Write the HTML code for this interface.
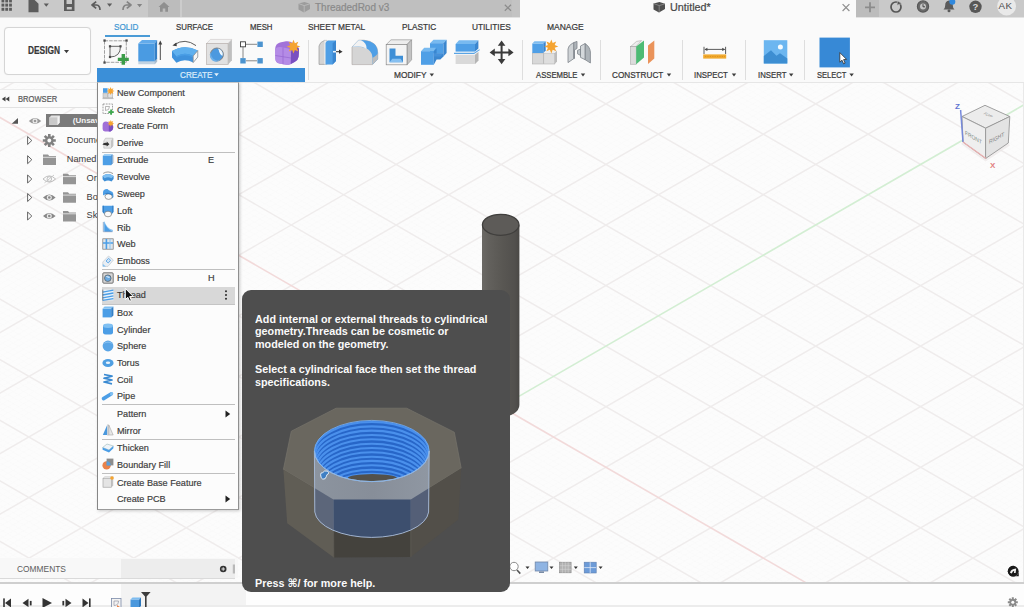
<!DOCTYPE html>
<html>
<head>
<meta charset="utf-8">
<title>Fusion</title>
<style>
html,body{margin:0;padding:0;}
body{width:1024px;height:607px;overflow:hidden;position:relative;background:#fcfcfc;font-family:"Liberation Sans","DejaVu Sans",sans-serif;color:#3c3c3c;}
.abs{position:absolute;}
#canvas{position:absolute;left:0;top:0;width:1024px;height:607px;}
#topbar{position:absolute;left:0;top:0;width:1024px;height:17px;background:#c9c9c9;overflow:hidden;}
.ttl{font-size:10.5px;white-space:nowrap;line-height:14px;}
#toolbar{position:absolute;left:0;top:17px;width:1024px;height:65px;background:#fafafa;border-bottom:1px solid #e6e6e6;}
.tab{position:absolute;top:22px;font-size:8.8px;line-height:11px;color:#3c3c3c;white-space:nowrap;transform:translateX(-50%);}
.grp{position:absolute;top:70px;font-size:8.8px;line-height:11px;color:#3c3c3c;white-space:nowrap;transform:translateX(-50%);}
.sep{position:absolute;top:40px;width:1px;height:40px;background:#dedede;}
#menu{position:absolute;left:97px;top:82px;width:142px;height:428px;background:#fcfcfc;border:1px solid #8f8f8f;border-left-color:#868686;border-bottom-color:#9a9a9a;border-top-color:#c8c8c8;box-sizing:border-box;box-shadow:1px 1px 3px rgba(0,0,0,.2);}
.mi{position:absolute;left:18.9px;font-size:9.8px;transform:scaleX(.93);transform-origin:0 50%;color:#333;-webkit-text-stroke:0.2px #555;white-space:nowrap;line-height:11px;letter-spacing:0;}
.msep{position:absolute;left:4px;width:133px;height:1px;background:#bfbfbf;}
.ic{position:absolute;left:4px;width:12px;height:12px;overflow:visible;}
#tip{position:absolute;left:242px;top:290px;width:268px;height:302px;background:#4e4e4e;border-radius:9px;overflow:hidden;}
#tip p{position:absolute;margin:0;left:13px;color:#fafafa;font-weight:bold;font-size:11.4px;line-height:12.4px;white-space:nowrap;transform:scaleX(.947);transform-origin:0 50%;}
.lb{position:absolute;white-space:nowrap;color:#383838;-webkit-text-stroke:0.22px currentColor;}
.fit{display:inline-block;transform-origin:0 50%;white-space:nowrap;}
.bt{position:absolute;font-size:9.2px;line-height:11px;color:#3a3a3a;white-space:nowrap;}
</style>
</head>
<body>
<svg id="canvas" width="1024" height="607" viewBox="0 0 1024 607">
<rect x="0" y="0" width="1024" height="607" fill="#fcfcfc"/>
<path d="M-10.0 84.0L1034.0 -518.7M-10.0 90.1L1034.0 -512.7M-10.0 102.2L1034.0 -500.6M-10.0 108.2L1034.0 -494.5M-10.0 114.3L1034.0 -488.4M-10.0 120.3L1034.0 -482.4M-10.0 126.4L1034.0 -476.3M-10.0 132.4L1034.0 -470.3M-10.0 138.5L1034.0 -464.2M-10.0 144.6L1034.0 -458.2M-10.0 150.6L1034.0 -452.1M-10.0 162.7L1034.0 -440.0M-10.0 168.8L1034.0 -433.9M-10.0 174.8L1034.0 -427.9M-10.0 180.9L1034.0 -421.8M-10.0 186.9L1034.0 -415.8M-10.0 193.0L1034.0 -409.7M-10.0 199.1L1034.0 -403.7M-10.0 205.1L1034.0 -397.6M-10.0 211.2L1034.0 -391.5M-10.0 223.3L1034.0 -379.4M-10.0 229.3L1034.0 -373.4M-10.0 235.4L1034.0 -367.3M-10.0 241.5L1034.0 -361.3M-10.0 247.5L1034.0 -355.2M-10.0 253.6L1034.0 -349.2M-10.0 259.6L1034.0 -343.1M-10.0 265.7L1034.0 -337.0M-10.0 271.7L1034.0 -331.0M-10.0 283.8L1034.0 -318.9M-10.0 289.9L1034.0 -312.8M-10.0 296.0L1034.0 -306.8M-10.0 302.0L1034.0 -300.7M-10.0 308.1L1034.0 -294.6M-10.0 314.1L1034.0 -288.6M-10.0 320.2L1034.0 -282.5M-10.0 326.2L1034.0 -276.5M-10.0 332.3L1034.0 -270.4M-10.0 344.4L1034.0 -258.3M-10.0 350.5L1034.0 -252.3M-10.0 356.5L1034.0 -246.2M-10.0 362.6L1034.0 -240.1M-10.0 368.6L1034.0 -234.1M-10.0 374.7L1034.0 -228.0M-10.0 380.7L1034.0 -222.0M-10.0 386.8L1034.0 -215.9M-10.0 392.9L1034.0 -209.9M-10.0 405.0L1034.0 -197.8M-10.0 411.0L1034.0 -191.7M-10.0 417.1L1034.0 -185.6M-10.0 423.1L1034.0 -179.6M-10.0 429.2L1034.0 -173.5M-10.0 435.2L1034.0 -167.5M-10.0 441.3L1034.0 -161.4M-10.0 447.4L1034.0 -155.4M-10.0 453.4L1034.0 -149.3M-10.0 465.5L1034.0 -137.2M-10.0 471.6L1034.0 -131.1M-10.0 477.6L1034.0 -125.1M-10.0 483.7L1034.0 -119.0M-10.0 489.7L1034.0 -113.0M-10.0 495.8L1034.0 -106.9M-10.0 501.9L1034.0 -100.9M-10.0 507.9L1034.0 -94.8M-10.0 514.0L1034.0 -88.7M-10.0 526.1L1034.0 -76.6M-10.0 532.1L1034.0 -70.6M-10.0 538.2L1034.0 -64.5M-10.0 544.3L1034.0 -58.5M-10.0 550.3L1034.0 -52.4M-10.0 556.4L1034.0 -46.4M-10.0 562.4L1034.0 -40.3M-10.0 568.5L1034.0 -34.2M-10.0 574.5L1034.0 -28.2M-10.0 586.6L1034.0 -16.1M-10.0 592.7L1034.0 -10.0M-10.0 598.8L1034.0 -4.0M-10.0 604.8L1034.0 2.1M-10.0 610.9L1034.0 8.2M-10.0 616.9L1034.0 14.2M-10.0 623.0L1034.0 20.3M-10.0 629.0L1034.0 26.3M-10.0 635.1L1034.0 32.4M-10.0 647.2L1034.0 44.5M-10.0 653.3L1034.0 50.5M-10.0 659.3L1034.0 56.6M-10.0 665.4L1034.0 62.7M-10.0 671.4L1034.0 68.7M-10.0 677.5L1034.0 74.8M-10.0 683.5L1034.0 80.8M-10.0 689.6L1034.0 86.9M-10.0 695.7L1034.0 92.9M-10.0 707.8L1034.0 105.0M-10.0 713.8L1034.0 111.1M-10.0 719.9L1034.0 117.2M-10.0 725.9L1034.0 123.2M-10.0 732.0L1034.0 129.3M-10.0 738.0L1034.0 135.3M-10.0 744.1L1034.0 141.4M-10.0 750.2L1034.0 147.4M-10.0 756.2L1034.0 153.5M-10.0 768.3L1034.0 165.6M-10.0 774.4L1034.0 171.7M-10.0 780.4L1034.0 177.7M-10.0 786.5L1034.0 183.8M-10.0 792.5L1034.0 189.8M-10.0 798.6L1034.0 195.9M-10.0 804.7L1034.0 201.9M-10.0 810.7L1034.0 208.0M-10.0 816.8L1034.0 214.1M-10.0 828.9L1034.0 226.2M-10.0 834.9L1034.0 232.2M-10.0 841.0L1034.0 238.3M-10.0 847.1L1034.0 244.3M-10.0 853.1L1034.0 250.4M-10.0 859.2L1034.0 256.4M-10.0 865.2L1034.0 262.5M-10.0 871.3L1034.0 268.6M-10.0 877.3L1034.0 274.6M-10.0 889.4L1034.0 286.7M-10.0 895.5L1034.0 292.8M-10.0 901.6L1034.0 298.8M-10.0 907.6L1034.0 304.9M-10.0 913.7L1034.0 311.0M-10.0 919.7L1034.0 317.0M-10.0 925.8L1034.0 323.1M-10.0 931.8L1034.0 329.1M-10.0 937.9L1034.0 335.2M-10.0 950.0L1034.0 347.3M-10.0 956.1L1034.0 353.3M-10.0 962.1L1034.0 359.4M-10.0 968.2L1034.0 365.5M-10.0 974.2L1034.0 371.5M-10.0 980.3L1034.0 377.6M-10.0 986.3L1034.0 383.6M-10.0 992.4L1034.0 389.7M-10.0 998.5L1034.0 395.7M-10.0 1010.6L1034.0 407.8M-10.0 1016.6L1034.0 413.9M-10.0 1022.7L1034.0 420.0M-10.0 1028.7L1034.0 426.0M-10.0 1034.8L1034.0 432.1M-10.0 1040.8L1034.0 438.1M-10.0 1046.9L1034.0 444.2M-10.0 1053.0L1034.0 450.2M-10.0 1059.0L1034.0 456.3M-10.0 1071.1L1034.0 468.4M-10.0 1077.2L1034.0 474.5M-10.0 1083.2L1034.0 480.5M-10.0 1089.3L1034.0 486.6M-10.0 1095.3L1034.0 492.6M-10.0 1101.4L1034.0 498.7M-10.0 1107.5L1034.0 504.7M-10.0 1113.5L1034.0 510.8M-10.0 1119.6L1034.0 516.9M-10.0 1131.7L1034.0 529.0M-10.0 1137.7L1034.0 535.0M-10.0 1143.8L1034.0 541.1M-10.0 1149.9L1034.0 547.1M-10.0 1155.9L1034.0 553.2M-10.0 1162.0L1034.0 559.2M-10.0 1168.0L1034.0 565.3M-10.0 1174.1L1034.0 571.4M-10.0 1180.1L1034.0 577.4M-10.0 584.1L1034.0 1186.8M-10.0 578.0L1034.0 1180.7M-10.0 571.9L1034.0 1174.7M-10.0 565.9L1034.0 1168.6M-10.0 559.8L1034.0 1162.6M-10.0 553.8L1034.0 1156.5M-10.0 547.7L1034.0 1150.4M-10.0 541.7L1034.0 1144.4M-10.0 529.6L1034.0 1132.3M-10.0 523.5L1034.0 1126.2M-10.0 517.4L1034.0 1120.2M-10.0 511.4L1034.0 1114.1M-10.0 505.3L1034.0 1108.0M-10.0 499.3L1034.0 1102.0M-10.0 493.2L1034.0 1095.9M-10.0 487.2L1034.0 1089.9M-10.0 481.1L1034.0 1083.8M-10.0 469.0L1034.0 1071.7M-10.0 462.9L1034.0 1065.7M-10.0 456.9L1034.0 1059.6M-10.0 450.8L1034.0 1053.5M-10.0 444.8L1034.0 1047.5M-10.0 438.7L1034.0 1041.4M-10.0 432.7L1034.0 1035.4M-10.0 426.6L1034.0 1029.3M-10.0 420.5L1034.0 1023.3M-10.0 408.4L1034.0 1011.2M-10.0 402.4L1034.0 1005.1M-10.0 396.3L1034.0 999.0M-10.0 390.3L1034.0 993.0M-10.0 384.2L1034.0 986.9M-10.0 378.2L1034.0 980.9M-10.0 372.1L1034.0 974.8M-10.0 366.0L1034.0 968.8M-10.0 360.0L1034.0 962.7M-10.0 347.9L1034.0 950.6M-10.0 341.8L1034.0 944.5M-10.0 335.8L1034.0 938.5M-10.0 329.7L1034.0 932.4M-10.0 323.7L1034.0 926.4M-10.0 317.6L1034.0 920.3M-10.0 311.5L1034.0 914.3M-10.0 305.5L1034.0 908.2M-10.0 299.4L1034.0 902.1M-10.0 287.3L1034.0 890.0M-10.0 281.3L1034.0 884.0M-10.0 275.2L1034.0 877.9M-10.0 269.1L1034.0 871.9M-10.0 263.1L1034.0 865.8M-10.0 257.0L1034.0 859.8M-10.0 251.0L1034.0 853.7M-10.0 244.9L1034.0 847.6M-10.0 238.9L1034.0 841.6M-10.0 226.8L1034.0 829.5M-10.0 220.7L1034.0 823.4M-10.0 214.6L1034.0 817.4M-10.0 208.6L1034.0 811.3M-10.0 202.5L1034.0 805.2M-10.0 196.5L1034.0 799.2M-10.0 190.4L1034.0 793.1M-10.0 184.4L1034.0 787.1M-10.0 178.3L1034.0 781.0M-10.0 166.2L1034.0 768.9M-10.0 160.1L1034.0 762.9M-10.0 154.1L1034.0 756.8M-10.0 148.0L1034.0 750.7M-10.0 142.0L1034.0 744.7M-10.0 135.9L1034.0 738.6M-10.0 129.9L1034.0 732.6M-10.0 123.8L1034.0 726.5M-10.0 117.7L1034.0 720.5M-10.0 105.6L1034.0 708.4M-10.0 99.6L1034.0 702.3M-10.0 93.5L1034.0 696.2M-10.0 87.5L1034.0 690.2M-10.0 81.4L1034.0 684.1M-10.0 75.4L1034.0 678.1M-10.0 69.3L1034.0 672.0M-10.0 63.2L1034.0 666.0M-10.0 57.2L1034.0 659.9M-10.0 45.1L1034.0 647.8M-10.0 39.0L1034.0 641.7M-10.0 33.0L1034.0 635.7M-10.0 26.9L1034.0 629.6M-10.0 20.9L1034.0 623.6M-10.0 14.8L1034.0 617.5M-10.0 8.7L1034.0 611.5M-10.0 2.7L1034.0 605.4M-10.0 -3.4L1034.0 599.3M-10.0 -15.5L1034.0 587.2M-10.0 -21.5L1034.0 581.2M-10.0 -27.6L1034.0 575.1M-10.0 -33.7L1034.0 569.1M-10.0 -39.7L1034.0 563.0M-10.0 -45.8L1034.0 557.0M-10.0 -51.8L1034.0 550.9M-10.0 -57.9L1034.0 544.8M-10.0 -63.9L1034.0 538.8M-10.0 -76.0L1034.0 526.7M-10.0 -82.1L1034.0 520.6M-10.0 -88.2L1034.0 514.6M-10.0 -94.2L1034.0 508.5M-10.0 -100.3L1034.0 502.4M-10.0 -106.3L1034.0 496.4M-10.0 -112.4L1034.0 490.3M-10.0 -118.4L1034.0 484.3M-10.0 -124.5L1034.0 478.2M-10.0 -136.6L1034.0 466.1M-10.0 -142.7L1034.0 460.1M-10.0 -148.7L1034.0 454.0M-10.0 -154.8L1034.0 447.9M-10.0 -160.8L1034.0 441.9M-10.0 -166.9L1034.0 435.8M-10.0 -172.9L1034.0 429.8M-10.0 -179.0L1034.0 423.7M-10.0 -185.1L1034.0 417.7M-10.0 -197.2L1034.0 405.6M-10.0 -203.2L1034.0 399.5M-10.0 -209.3L1034.0 393.4M-10.0 -215.3L1034.0 387.4M-10.0 -221.4L1034.0 381.3M-10.0 -227.4L1034.0 375.3M-10.0 -233.5L1034.0 369.2M-10.0 -239.6L1034.0 363.2M-10.0 -245.6L1034.0 357.1M-10.0 -257.7L1034.0 345.0M-10.0 -263.8L1034.0 338.9M-10.0 -269.8L1034.0 332.9M-10.0 -275.9L1034.0 326.8M-10.0 -281.9L1034.0 320.8M-10.0 -288.0L1034.0 314.7M-10.0 -294.1L1034.0 308.7M-10.0 -300.1L1034.0 302.6M-10.0 -306.2L1034.0 296.5M-10.0 -318.3L1034.0 284.4M-10.0 -324.3L1034.0 278.4M-10.0 -330.4L1034.0 272.3M-10.0 -336.5L1034.0 266.3M-10.0 -342.5L1034.0 260.2M-10.0 -348.6L1034.0 254.2M-10.0 -354.6L1034.0 248.1M-10.0 -360.7L1034.0 242.0M-10.0 -366.7L1034.0 236.0M-10.0 -378.8L1034.0 223.9M-10.0 -384.9L1034.0 217.8M-10.0 -391.0L1034.0 211.8M-10.0 -397.0L1034.0 205.7M-10.0 -403.1L1034.0 199.6M-10.0 -409.1L1034.0 193.6M-10.0 -415.2L1034.0 187.5M-10.0 -421.2L1034.0 181.5M-10.0 -427.3L1034.0 175.4M-10.0 -439.4L1034.0 163.3M-10.0 -445.5L1034.0 157.3M-10.0 -451.5L1034.0 151.2M-10.0 -457.6L1034.0 145.1M-10.0 -463.6L1034.0 139.1M-10.0 -469.7L1034.0 133.0M-10.0 -475.7L1034.0 127.0M-10.0 -481.8L1034.0 120.9M-10.0 -487.9L1034.0 114.9M-10.0 -500.0L1034.0 102.8M-10.0 -506.0L1034.0 96.7M-10.0 -512.1L1034.0 90.6M-10.0 -518.1L1034.0 84.6" stroke="#f9f8f8" stroke-width="0.5" fill="none"/>
<path d="M-10.0 96.1L1034.0 -506.6M-10.0 156.7L1034.0 -446.0M-10.0 217.2L1034.0 -385.5M-10.0 277.8L1034.0 -324.9M-10.0 338.3L1034.0 -264.4M-10.0 398.9L1034.0 -203.8M-10.0 459.5L1034.0 -143.2M-10.0 520.0L1034.0 -82.7M-10.0 580.6L1034.0 -22.1M-10.0 641.1L1034.0 38.4M-10.0 762.3L1034.0 159.6M-10.0 822.8L1034.0 220.1M-10.0 883.4L1034.0 280.7M-10.0 943.9L1034.0 341.2M-10.0 1004.5L1034.0 401.8M-10.0 1065.1L1034.0 462.4M-10.0 1125.6L1034.0 522.9M-10.0 1186.2L1034.0 583.5M-10.0 535.6L1034.0 1138.3M-10.0 475.1L1034.0 1077.8M-10.0 414.5L1034.0 1017.2M-10.0 353.9L1034.0 956.6M-10.0 293.4L1034.0 896.1M-10.0 232.8L1034.0 835.5M-10.0 172.3L1034.0 775.0M-10.0 51.1L1034.0 653.8M-10.0 -9.4L1034.0 593.3M-10.0 -70.0L1034.0 532.7M-10.0 -130.5L1034.0 472.2M-10.0 -191.1L1034.0 411.6M-10.0 -251.7L1034.0 351.0M-10.0 -312.2L1034.0 290.5M-10.0 -372.8L1034.0 229.9M-10.0 -433.3L1034.0 169.4M-10.0 -493.9L1034.0 108.8" stroke="#efecec" stroke-width="1.5" fill="none"/>
<path d="M-10.0 701.7L501.0 406.7" stroke="#efecec" stroke-width="1.5"/>
<path d="M501.0 406.7L1034.0 99.0" stroke="#d3eed3" stroke-width="1.6"/>
<path d="M-10.0 111.7L1034.0 714.4" stroke="#f2dada" stroke-width="1.6"/>
<defs>
<linearGradient id="cylg" x1="0" x2="1" y1="0" y2="0">
<stop offset="0" stop-color="#6b6965"/><stop offset="0.18" stop-color="#63615d"/><stop offset="0.55" stop-color="#595753"/><stop offset="0.88" stop-color="#52504d"/><stop offset="1" stop-color="#4a4845"/>
</linearGradient>
</defs>
<!-- cylinder -->
<path d="M482 225 L482 405 A18.700 12 0 0 0 519.400 405 L519.400 225 Z" fill="url(#cylg)"/>
<ellipse cx="500.700" cy="224.800" rx="18.300" ry="10.500" fill="#5d5b58" stroke="#403f3d" stroke-width="1.3"/>
<!-- viewcube -->
<g>
<path d="M962.5 142 L985.6 158.5 L1008.5 143.5" fill="none" stroke="#e9e4e4" stroke-width="5" opacity=".6"/>
<polygon points="985,105.3 1009.8,116.5 985.6,128.2 962,116.5" fill="#ececec" stroke="#969696" stroke-width="0.9"/>
<polygon points="962,116.5 985.6,128.2 985.6,158.5 963,142" fill="#efefef" stroke="#969696" stroke-width="0.9"/>
<polygon points="985.6,128.2 1009.8,116.5 1008.3,143 985.6,158.5" fill="#e3e3e3" stroke="#969696" stroke-width="0.9"/>
<path d="M960.6 110 L963 142" stroke="#7689da" stroke-width="1.5"/>
<path d="M963 142 L986 158.6" stroke="#eab0b0" stroke-width="1.2"/>
<text x="955" y="109" font-family="Liberation Sans, sans-serif" font-size="8" fill="#5f73d2" font-weight="bold">Z</text>
<text x="990" y="168" font-family="Liberation Sans, sans-serif" font-size="8" fill="#e27f7f" font-weight="bold">X</text>
<text transform="matrix(0.86,0.5,0,1,965,134.5)" font-family="Liberation Sans, sans-serif" font-size="5.7" fill="#7d8a86">FRONT</text>
<text transform="matrix(0.86,-0.46,0,1,989,144)" font-family="Liberation Sans, sans-serif" font-size="5.7" fill="#7d7d7d">RIGHT</text>
<text transform="matrix(0.86,0.42,-0.86,0.42,982.5,113.5)" font-family="Liberation Sans, sans-serif" font-size="4.6" fill="#8a8a8a">TOP</text>
</g>

</svg>
<div class="abs" style="left:0;top:89px;width:97px;height:1px;background:#ececec"></div>
<div class="abs" style="left:0;top:90px;width:97px;height:17px;background:#fbfbfb"></div>
<div class="abs" style="left:0;top:107px;width:97px;height:1px;background:#e2e2e2"></div>
<div class="abs" style="left:46px;top:114.2px;width:52px;height:12.6px;background:#7a7a7a"></div>
<div class="bt" style="left:72.8px;top:115.4px;font-size:8px;font-weight:bold;color:#f4f4f4">(Unsaved)</div>
<div class="bt" style="left:66.8px;top:134.8px">Document Settings</div>
<div class="bt" style="left:66.8px;top:154px">Named Views</div>
<div class="bt" style="left:86.5px;top:173.2px">Origin</div>
<div class="bt" style="left:86.5px;top:191.8px">Bodies</div>
<div class="bt" style="left:86.5px;top:210.4px">Sketches</div>
<svg class="abs" style="left:0;top:84px" width="97" height="146" viewBox="0 84 97 146">
<path d="M1.800 99 L5.500 96.600 V101.400 Z M5.600 99 L9.300 96.600 V101.400 Z" fill="#444"/>
<path d="M11.700 123.700 H18 V118 Z" fill="#555"/>
<!-- eye row1 -->
<g><path d="M28.800 121 Q35 114.800 41.200 121 Q35 127.200 28.800 121 Z" fill="#9a9a9a"/><circle cx="35" cy="121" r="2.500" fill="#ececec"/><circle cx="35" cy="121" r="1.300" fill="#9a9a9a"/></g>
<!-- cube icon -->
<path d="M49.400 117.400 L51.400 115.600 H59.600 V122.800 L57.600 124.900 H49.400 Z" fill="#e3e3e3"/>
<path d="M49.400 117.400 H57.600 V124.900 H49.400 Z" fill="#c9c9c9"/>
<path d="M57.600 117.400 L59.600 115.600 V122.800 L57.600 124.900 Z" fill="#f2f2f2"/>
<!-- triangles -->
<g fill="none" stroke="#555" stroke-width=".9">
<path d="M27.600 136.500 L31.800 140.500 L27.600 144.500 Z"/>
<path d="M27.600 155.700 L31.800 159.700 L27.600 163.700 Z"/>
<path d="M27.600 175 L31.800 179 L27.600 183 Z"/>
<path d="M27.600 193.500 L31.800 197.500 L27.600 201.500 Z"/>
<path d="M27.600 212 L31.800 216 L27.600 220 Z"/>
</g>
<!-- gear -->
<g transform="translate(49.300 140.500)">
<circle r="4.300" fill="#808080"/>
<g stroke="#808080" stroke-width="2.600"><path d="M0 -6.500 V6.500 M-6.500 0 H6.500 M-4.600 -4.600 L4.600 4.600 M-4.600 4.600 L4.600 -4.600"/></g>
<circle r="1.900" fill="#fafafa"/>
</g>
<!-- folders -->
<g fill="#959595">
<path d="M43 154.500 H48 L49.200 156 H56 V165 H43 Z"/>
<path d="M63 173.800 H68 L69.200 175.300 H76 V184.300 H63 Z"/>
<path d="M63 192.300 H68 L69.200 193.800 H76 V202.800 H63 Z"/>
<path d="M63 211 H68 L69.200 212.500 H76 V221.500 H63 Z"/>
</g>
<g stroke="#fafafa" stroke-width=".7"><path d="M43 157.300 H56 M63 176.600 H76 M63 195.100 H76 M63 213.800 H76"/></g>
<!-- eyes rows 4-6 -->
<g><path d="M43 179 Q49.300 172.800 55.600 179 Q49.300 185.200 43 179 Z" fill="none" stroke="#b9b9b9" stroke-width=".9"/><circle cx="49.300" cy="179" r="2.300" fill="none" stroke="#b9b9b9" stroke-width=".9"/><path d="M44.500 182.800 L54 175" stroke="#c4c4c4" stroke-width=".9"/></g>
<g><path d="M43 197.500 Q49.300 191.300 55.600 197.500 Q49.300 203.700 43 197.500 Z" fill="#888888"/><circle cx="49.300" cy="197.500" r="2.500" fill="#e9e9e9"/><circle cx="49.300" cy="197.500" r="1.300" fill="#888888"/></g>
<g><path d="M43 216 Q49.300 209.800 55.600 216 Q49.300 222.200 43 216 Z" fill="#888888"/><circle cx="49.300" cy="216" r="2.500" fill="#e9e9e9"/><circle cx="49.300" cy="216" r="1.300" fill="#888888"/></g>
</svg>
<div class="abs" style="left:1023px;top:83px;width:1px;height:500px;background:#e9e9e9"></div>
<div class="abs" style="left:0;top:558px;width:238px;height:20px;background:#f8f8f8"></div>
<div class="abs" style="left:121px;top:559px;width:114px;height:18.500px;background:#ededed"></div>
<div class="abs" style="left:0;top:577.500px;width:235px;height:1px;background:#dadada"></div>
<div class="abs" style="left:0;top:582px;width:1024px;height:1.500px;background:#cfcfcf"></div>
<div class="abs" style="left:0;top:583.500px;width:1024px;height:24px;background:#fdfdfd"></div>
<div class="abs" style="left:121px;top:584px;width:125px;height:23px;background:#f3f3f3"></div>
<div class="abs" style="left:0;top:604.500px;width:1024px;height:3px;background:#ececec"></div>
<svg class="abs" style="left:0;top:556px" width="1024" height="51" viewBox="0 556 1024 51">
<circle cx="223.200" cy="569" r="3.300" fill="#333"/><path d="M221.400 569 H225 M223.200 567.200 V570.800" stroke="#eee" stroke-width=".9"/>
<rect x="232.800" y="564.500" width="2.200" height="9" fill="#b9b9b9"/>
<!-- timeline controls -->
<g fill="#333" transform="translate(0 1.400)">
<rect x="3.200" y="597" width="1.600" height="9"/><path d="M11 597 V606 L5 601.500 Z"/>
<path d="M28.500 597.300 V605.700 L22.500 601.500 Z"/><rect x="29.800" y="599.500" width="1.800" height="4.500"/>
<path d="M42.500 596.500 L52 601.500 L42.500 606.500 Z"/>
<path d="M65.500 597.300 V605.700 L71.500 601.500 Z"/><rect x="62.400" y="599.500" width="1.800" height="4.500"/>
<path d="M82.500 597 V606 L88.500 601.500 Z"/><rect x="89" y="597" width="1.600" height="9"/>
</g>
<g transform="translate(0 1)"><rect x="111.500" y="597.500" width="9.500" height="9.500" fill="#f3f3f3" stroke="#7a8aa8" stroke-width=".8"/>
<path d="M114 600 H118.500 Q118.500 604.500 114 604.500 Z" fill="none" stroke="#889" stroke-width=".6"/>
<path d="M117 604 L121.500 607 H117 Z" fill="#e9824a"/>
<rect x="130.500" y="598.500" width="8.500" height="8.500" fill="#4a98dd"/><path d="M130.500 598.500 L132.500 596.600 H141 L139 598.500 Z" fill="#7dbcf0"/><path d="M139 598.500 L141 596.600 V605 L139 607 Z" fill="#2f78bc"/></g>
<path d="M141 592 H150.600 L146.600 596.400 V607 H145 V596.400 Z" fill="#3d3d3d"/>
<!-- nav icons -->
<circle cx="514" cy="566.500" r="4.200" fill="#fff" stroke="#8c8c8c" stroke-width="1"/>
<path d="M517 570 L520.300 573.600" stroke="#555" stroke-width="1.600"/>
<g fill="#333"><path d="M525.500 566.500 H529.500 L527.500 569 Z"/><path d="M549.500 566.500 H553.500 L551.500 569 Z"/><path d="M573.800 566.500 H577.800 L575.800 569 Z"/><path d="M598.600 566.500 H602.600 L600.600 569 Z"/></g>
<rect x="535.200" y="562" width="12.600" height="9" fill="#8fb4e3" stroke="#6f86a8" stroke-width=".8"/><rect x="539" y="571.400" width="5" height="1.600" fill="#7a8ca6"/>
<rect x="559.500" y="562.200" width="11.600" height="10.600" fill="#b2b2b2" stroke="#888" stroke-width=".6"/>
<path d="M562.400 562.200 V572.800 M565.300 562.200 V572.800 M568.200 562.200 V572.800 M559.500 565.700 H571.100 M559.500 569.300 H571.100" stroke="#d8d8d8" stroke-width=".5"/>
<rect x="584.200" y="562.200" width="12" height="10.800" fill="#6c9bd8" stroke="#5f7fae" stroke-width=".6"/>
<path d="M590.200 562.200 V573 M584.200 567.600 H596.200" stroke="#dfe9f6" stroke-width=".8"/>
<!-- right icons -->
<g transform="translate(12.2 0.400)"><path d="M1001 565.400 A5.400 5.400 0 1 0 1006.400 570.800 L1006.600 575.800 L1003 575.800 Z" fill="#1a1a1a"/><circle cx="1001" cy="570.800" r="5.400" fill="#1a1a1a"/>
<path d="M997.800 572.400 Q998.500 568.800 1004 568.200 L1003.400 572.600 L1001.800 572.600 L1002 570.400 Q1000.400 570.800 999.600 573 Z" fill="#f5f5f5"/></g>
<g transform="translate(1012.800 602.300)"><circle r="3.300" fill="#8a8a8a"/><g stroke="#8a8a8a" stroke-width="2"><path d="M0 -5 V5 M-5 0 H5 M-3.500 -3.500 L3.500 3.500 M-3.500 3.500 L3.500 -3.500"/></g><circle r="1.500" fill="#fdfdfd"/></g>
</svg>
<div id="topbar">
<div class="abs" style="left:148px;top:0;width:32px;height:17px;background:#bcbcbc"></div>
<div class="abs" style="left:180px;top:0;width:2px;height:17px;background:#cccccc"></div>
<div class="abs" style="left:182px;top:0;width:330px;height:17px;background:#bfbfbf"></div>
<div class="abs" style="left:512px;top:0;width:8px;height:17px;background:#c3c3c3"></div>
<div class="abs" style="left:520px;top:0;width:336px;height:17px;background:#fafafa"></div>
<div class="abs" style="left:856px;top:0;width:23px;height:17px;background:#bcbcbc"></div>
<svg class="abs" style="left:0;top:0" width="1024" height="17" viewBox="0 0 1024 17">
<g fill="#5c5c5c" transform="translate(0 0.800)">
<!-- grid -->
<rect x="1.5" y="-1" width="2.8" height="2.6"/><rect x="5.3" y="-1" width="2.8" height="2.6"/><rect x="9.1" y="-1" width="2.8" height="2.6"/>
<rect x="1.5" y="2.8" width="2.8" height="3"/><rect x="5.3" y="2.8" width="2.8" height="3"/><rect x="9.1" y="2.8" width="2.8" height="3"/>
<rect x="1.5" y="7" width="2.8" height="3"/><rect x="5.3" y="7" width="2.8" height="3"/><rect x="9.1" y="7" width="2.8" height="3"/>
<!-- file -->
<path d="M28.5 -1 H34.5 L38.5 3 V11.5 H28.5 Z"/>
<!-- save -->
<path d="M64 -1 H74.5 V10.2 H64 Z M66.5 -1 V3.2 H72 V-1 Z M66.8 6.2 V8.8 H71.8 V6.2 Z" fill-rule="evenodd"/>
</g>
<path d="M43.7 3.6 H48.9 L46.3 6.8 Z M107 3.6 H112.2 L109.6 6.8 Z" fill="#5c5c5c"/>
<path transform="translate(0 0.500)" d="M96.2 1.2 L92 4.5 L96.2 7.8 M92.5 4.5 H96.5 Q100 4.8 100 9.5" fill="none" stroke="#5c5c5c" stroke-width="1.7" stroke-linejoin="round"/>
<g opacity=".72" transform="translate(0 0.500)">
<path d="M126.8 1.2 L131 4.5 L126.8 7.8 M130.5 4.5 H126.5 Q123 4.8 123 9.5" fill="none" stroke="#6a6a6a" stroke-width="1.7" stroke-linejoin="round"/>
<path d="M137 3.6 H142.2 L139.6 6.8 Z" fill="#6a6a6a"/>
</g>
<!-- home -->
<path d="M158.5 7 L164 2 L169.5 7 H168 V11.8 H165.3 V8.6 H162.7 V11.8 H160 V7 Z" fill="#8f8f8f"/>
<!-- tab1 icon cube -->
<path d="M298.5 3.5 L304.5 2 L310 3.8 V9 L304 12.5 L298.5 9.5 Z" fill="#9c9c9c"/>
<path d="M298.5 3.5 L304.2 5.6 L310 3.8 M304.2 5.6 V12.3" stroke="#c4c4c4" stroke-width=".7" fill="none"/>
<path d="M504.800 4.800 L511 10.800 M511 4.800 L504.800 10.800" stroke="#8c8c8c" stroke-width="1.2"/>
<!-- tab2 icon cube -->
<path d="M653.5 3.5 L659.5 2 L665 3.8 V9 L659 12.5 L653.5 9.5 Z" fill="#4f4f4f"/>
<path d="M653.5 3.5 L659.2 5.6 L665 3.8 M659.2 5.6 V12.3" stroke="#9a9a9a" stroke-width=".7" fill="none"/>
<path d="M842.6 4.200 L849.400 11 M849.400 4.200 L842.600 11" stroke="#8f8f8f" stroke-width="1.2"/>
<!-- plus -->
<path d="M865 7.3 H875 M870 2.3 V12.3" stroke="#8c8c8c" stroke-width="1.8"/>
<!-- refresh -->
<circle cx="896" cy="7" r="5" fill="none" stroke="#555" stroke-width="1.7"/>
<path d="M897.5 0.8 L901.8 3.6 L897 5.2 Z" fill="#555" stroke="#cacaca" stroke-width=".6"/>
<!-- clock -->
<circle cx="923" cy="6.5" r="5.6" fill="#6a6a6a" stroke="#585858" stroke-width="1.2"/>
<circle cx="923" cy="6.5" r="3" fill="#c4c4c4"/>
<path d="M923 4.2 V6.8 H925" stroke="#444" stroke-width="1" fill="none"/>
<!-- bell -->
<path d="M949 0.5 Q952.8 1 952.8 5.2 Q952.8 8 954.5 9.6 H943.5 Q945.2 8 945.2 5.2 Q945.2 1 949 0.5 Z" fill="#5b5b5b"/>
<circle cx="949" cy="10.8" r="1.5" fill="#5b5b5b"/>
<circle cx="952.3" cy="1.8" r="3" fill="#2f88dd"/>
<!-- help -->
<circle cx="975.5" cy="6.8" r="6.2" fill="#565656"/>
<text x="975.5" y="10.3" text-anchor="middle" font-family="Liberation Sans, sans-serif" font-size="9.5" font-weight="bold" fill="#d8d8d8">?</text>
<!-- avatar -->
<circle cx="1006.6" cy="6.2" r="9.4" fill="#e9e9e9"/>
</svg>
<div class="abs" style="left:998.5px;top:0px;font-size:9.8px;color:#4f4f4f;letter-spacing:.4px">AK</div>
</div>
<div id="toolbar">
<div class="abs" style="left:0;top:0;width:520px;height:1px;background:#e2e2e2"></div><div class="abs" style="left:856px;top:0;width:168px;height:1px;background:#e2e2e2"></div>
<div class="abs" style="left:4px;top:9.5px;width:85px;height:46px;border:1px solid #d5d5d5;border-radius:4px;background:#fdfdfd;box-shadow:0 0 1px #e4e4e4"></div>
<!--LABELS-->
<div class="abs" style="left:97px;top:51px;width:208px;height:14px;background:#3b8fd8"></div>
<div class="abs" style="left:104.5px;top:17.5px;width:45px;height:2.5px;background:#4a9bd6"></div>
</div>
<div class="sep" style="left:308px"></div>
<div class="sep" style="left:522px"></div>
<div class="sep" style="left:600px"></div>
<div class="sep" style="left:682px"></div>
<div class="sep" style="left:745px"></div>
<div class="sep" style="left:804px"></div>
<svg class="abs" style="left:0;top:17px" width="1024" height="66" viewBox="0 17 1024 66">
<g fill="#3c3c3c">
<path d="M64 50 H69 L66.5 53.2 Z"/>
<path d="M429.6 73.6 H434 L431.8 76.4 Z"/>
<path d="M580.8 73.6 H585.2 L583 76.4 Z"/>
<path d="M666.8 73.6 H671.2 L669 76.4 Z"/>
<path d="M731.8 73.6 H736.2 L734 76.4 Z"/>
<path d="M789 73.6 H793.4 L791.2 76.4 Z"/>
<path d="M849.4 73.6 H853.8 L851.6 76.4 Z"/>
</g>
<path d="M214.2 73.2 H218.8 L216.5 76.2 Z" fill="#e6f2fc"/>
<!-- 1 sketch -->
<g>
<rect x="104.5" y="40.8" width="21.800" height="21.500" fill="none" stroke="#8a8a8a" stroke-width=".8" stroke-dasharray="3.6 1"/>
<g fill="#4a4a4a"><rect x="103.4" y="39.4" width="2.3" height="2.3"/><rect x="125.4" y="39.4" width="2.3" height="2.3"/><rect x="103.4" y="61.4" width="2.3" height="2.3"/></g>
<path d="M110 46.3 H120.5 Q120.5 57 110 57 Z" fill="#f2f2f2" stroke="#555" stroke-width=".9"/>
<g fill="#4a4a4a"><rect x="108.9" y="45.2" width="2.2" height="2.2"/><rect x="119.4" y="45.2" width="2.2" height="2.2"/><rect x="108.9" y="55.9" width="2.2" height="2.2"/></g>
<path d="M121.6 54 H125 V57.7 H128.8 V61 H125 V64.8 H121.6 V61 H117.8 V57.7 H121.6 Z" fill="#3c9d49"/>
</g>
<!-- 2 extrude -->
<g>
<path d="M138.300 61 H154.700 L157.100 58.200 V61.400 L154.700 64.200 H138.300 Z" fill="#c2d3e2"/>
<path d="M154.700 61 L157.100 58.200 V61.400 L154.700 64.200 Z" fill="#a9bccd"/>
<rect x="138.300" y="43.500" width="16.400" height="17.800" fill="#4a9be2"/>
<path d="M138.300 43.500 L142 40.100 H157.100 L154.700 43.500 Z" fill="#62abeb"/>
<path d="M154.700 43.500 L157.100 40.100 V58.400 L154.700 61.300 Z" fill="#3580c6"/>
<path d="M160.300 43.500 V60" stroke="#4a4a4a" stroke-width="1"/>
<path d="M160.300 40.600 L162.200 44.600 H158.400 Z" fill="#3f3f3f"/>
</g>
<!-- 3 revolve -->
<g>
<path d="M172 51 Q184.500 43.500 197.800 50.600 L197.800 57 L193.200 62.600 Q184.500 57.600 176.400 62.800 L172 57.600 Z" fill="#3f92dc"/>
<path d="M172 51 Q184.500 43.500 197.800 50.600 L193.200 56 Q184.500 51.200 176.400 56.200 Z" fill="#5fb0ee"/>
<path d="M176.400 56.200 Q184.500 51.200 193.200 56 L193.200 57.600 Q184.500 53 176.400 57.800 Z" fill="#4a9fe6"/>
<path d="M193.200 56 L197.800 50.600 V57 L193.200 62.600 Z" fill="#f6f6f6" stroke="#8a8a8a" stroke-width=".7"/>
<path d="M174.400 44.600 Q185 37.600 196 45.600" fill="none" stroke="#4a4a4a" stroke-width=".9"/>
<path d="M172.400 45.600 L176.400 42.600 L176.800 46.200 Z" fill="#3f3f3f"/>
</g>
<!-- 4 hole -->
<g>
<path d="M206.600 43.500 L210.400 39.400 H231.900 L228.100 43.500 Z" fill="#f0f0f0" stroke="#c4bfbc" stroke-width=".5"/>
<path d="M228.100 43.500 L231.900 39.400 V60.200 L228.100 64.500 Z" fill="#bfbfbf"/>
<rect x="206.600" y="43.500" width="21.500" height="21" fill="#e1e1e1" stroke="#b9b3af" stroke-width=".7"/>
<circle cx="216.900" cy="54.500" r="6.500" fill="#4c99df" stroke="#7c7c7c" stroke-width=".9"/>
<path d="M217.600 48.600 A6 6 0 0 1 222.800 55.600 Q221 51.500 217.600 48.600 Z" fill="#eaf5fd"/>
<path d="M218.500 49 Q222.400 51.500 222.500 56 Q219.500 54.500 218.500 49 Z" fill="#f4faff"/>
<path d="M211.400 51.600 A6 6 0 0 0 220.600 59.600 A6.600 6.600 0 0 1 211.400 51.600 Z" fill="#6db0ea"/>
</g>
<!-- 5 pattern -->
<g>
<path d="M243 47 V58 M246 44.3 H257 M246 60.8 H257" stroke="#7a7a7a" stroke-width=".9" fill="none"/>
<rect x="240.5" y="41.8" width="5" height="5" fill="#fff" stroke="#3f3f3f" stroke-width=".9"/>
<rect x="257.4" y="41.6" width="5.4" height="5.4" fill="#4b93cf"/>
<rect x="240.3" y="58.1" width="5.4" height="5.4" fill="#4b93cf"/>
<rect x="257.4" y="58.1" width="5.4" height="5.4" fill="#4b93cf"/>
</g>
<!-- 6 form -->
<g>
<path d="M275.2 49 Q275.2 44 280 42.6 L286 41.3 Q290 40.8 293 43 L297 46 Q299.3 48 299 52 L298.5 57 Q298 60 295 61.8 L290.5 64.2 Q288 65 285 64.6 L279.5 63.6 Q275.6 62.6 275.4 59 Z" fill="#a272d9"/>
<path d="M275.3 49.5 Q276 46.5 280.5 47 L288.5 48.6 Q291 49.5 291 52.5 L290.8 64 Q288 65 285 64.6 L279.5 63.6 Q275.6 62.6 275.4 59 Z" fill="#b48be6"/>
<path d="M291 52.5 Q291.5 49.5 294 47.5 L297.3 46.2 Q299.3 48 299 52 L298.5 57 Q298 60 295 61.8 L290.8 64 Z" fill="#7a4fc0"/>
<path d="M283 47.5 V64.3 M275.4 55.5 L290.9 58" stroke="#9566d0" stroke-width=".7" fill="none"/>
<path d="M293.5 39.8 L294.9 43.3 L298.3 41.8 L296.8 45.2 L300.3 46.6 L296.8 48 L298.3 51.4 L294.9 49.9 L293.5 53.4 L292.1 49.9 L288.7 51.4 L290.2 48 L286.7 46.6 L290.2 45.2 L288.7 41.8 L292.1 43.3 Z" fill="#f5a431"/>
</g>
<!-- 7 press pull -->
<g>
<path d="M319 46 Q319.8 42.2 324.5 40.4 L327 40.4 V64.4 H319 Z" fill="#d4d4d4" stroke="#8c8c8c" stroke-width=".6"/>
<path d="M324.5 40.4 H336 L333 43 V64.4 H324.5 Q324.2 50 324.5 40.4" fill="#f0f0f0"/>
<path d="M325.5 43 Q326 41 328 40.4 H336 V61 L332.6 64.4 H325.5 Z" fill="#4f9fe6"/>
<path d="M332.6 43.2 L336 40.4 V61 L332.6 64.4 Z" fill="#3a86cf"/>
<path d="M333 51.7 H339" stroke="#e9f3fc" stroke-width="1.6"/>
<path d="M336 51.7 H340" stroke="#333" stroke-width="1"/>
<path d="M342.6 51.7 L339 49.6 V53.8 Z" fill="#333"/>
</g>
<!-- 8 fillet -->
<g>
<path d="M352 47 L358.5 40.2 H364 Q377.8 41.5 377.8 53 V59 L372.5 64.6 H352 Z" fill="#d5d5d5" stroke="#a9a39f" stroke-width=".6"/>
<path d="M358.5 40.2 H364 Q377.8 41.5 377.8 53 V59 L372.5 64.6 V58 Q372 47.5 358 46.6 L352.3 46.8 Z" fill="#4f9fe6"/>
<path d="M358.5 40.2 L352.3 46.8 L358 46.6 Q363 46.5 366.6 49 Q367 43 361 40.3 Z" fill="#f2f2f2"/>
<path d="M372.5 58 Q377.5 55 377.8 53 V59 L372.5 64.6 Z" fill="#bdbdbd"/>
</g>
<!-- 9 shell -->
<g>
<path d="M386.2 44.6 L391 39.8 H411.6 L407 44.6 Z" fill="#ededed" stroke="#8a8a8a" stroke-width=".6"/>
<path d="M407 44.6 L411.6 39.8 V59.8 L407 64.8 Z" fill="#c3c3c3" stroke="#8a8a8a" stroke-width=".6"/>
<rect x="386.2" y="44.6" width="20.8" height="20.2" fill="#f4f4f4" stroke="#8a8a8a" stroke-width=".7"/>
<path d="M389.5 48.6 H395.5 V55.8 H403 V62.2 H389.5 Z" fill="#3f8fd6"/>
<path d="M391.6 50.5 L395.5 48.6 V55.8 H403 L401 57.8 H391.6 Z" fill="#74b4ec" opacity=".0"/>
<path d="M389.5 62.2 L392.3 58.8 H400.6 L403 62.2 Z" fill="#86c0f1"/>
</g>
<!-- 10 combine -->
<g>
<path d="M430 43.2 L433.5 39.8 H446.6 L443.4 43.2 Z" fill="#78baf0"/>
<rect x="430" y="43.2" width="13.4" height="10" fill="#4f9fe6"/>
<path d="M443.400 43.2 L446.6 39.8 V53 L443.4 56.5 Z" fill="#3a86cf"/>
<path d="M421 51.2 L424.2 47.8 H436 L433.6 51.2 Z" fill="#78baf0"/>
<rect x="421" y="51.2" width="12.8" height="13.6" fill="#4f9fe6"/>
<path d="M433.8 51.2 L436.6 48.2 V53.400 H443.5 V56.400 L440.3 59.6 H436.6 L433.8 64.8 Z" fill="#3a86cf"/>
<path d="M433.8 53.2 H443.4 L440.300 56.6 H433.8 Z" fill="#4590da"/>
</g>
<!-- 11 split -->
<g>
<path d="M455.6 54.8 H475 L478.4 52 V60.6 L475 64 H455.600 Z" fill="#d9d9d9"/>
<path d="M475 54.8 L478.4 52 V60.6 L475 64 Z" fill="#b5b5b5"/>
<path d="M455.6 44 L459 40.2 H478.4 L475 44 Z" fill="#78baf0"/>
<rect x="455.6" y="44" width="19.4" height="7.6" fill="#4f9fe6"/>
<path d="M475 44 L478.4 40.2 V48.6 L475 51.6 Z" fill="#3a86cf"/>
<path d="M454 53.4 H474 L479.6 49.600" stroke="#5aa4e4" stroke-width="1.1" fill="none"/>
</g>
<!-- 12 move -->
<g fill="#3a3a3a">
<path d="M501.600 40.6 L505.400 45.8 H502.600 V51.400 H508.400 V48.600 L513.600 52.400 L508.400 56.200 V53.400 H502.600 V59 H505.400 L501.600 64.200 L497.800 59 H500.600 V53.400 H494.800 V56.200 L489.600 52.400 L494.800 48.600 V51.400 H500.600 V45.800 H497.800 Z"/>
</g>
<!-- 13 new component -->
<g>
<rect x="532.3" y="53" width="11" height="11" fill="#d8d8d8" stroke="#a8a8a8" stroke-width=".5"/>
<rect x="543.8" y="53" width="11" height="11" fill="#dedede" stroke="#a8a8a8" stroke-width=".5"/>
<path d="M543.8 53 L546 50.500 H557 L554.800 53 Z" fill="#efefef"/>
<path d="M554.800 53 L557 50.500 V61.500 L554.800 64 Z" fill="#bcbcbc"/>
<rect x="532.3" y="43.5" width="11" height="9.500" fill="#4f9fe6"/>
<path d="M532.3 43.5 L534.500 41.200 H545.700 L543.300 43.5 Z" fill="#7dbcf0"/>
<path d="M543.300 43.500 L545.700 41.200 V50.600 L543.300 53 Z" fill="#3a86cf"/>
<path d="M551.3 39.400 L552.700 43 L556.200 41.500 L554.700 45 L558.300 46.400 L554.700 47.800 L556.200 51.300 L552.700 49.800 L551.300 53.400 L549.900 49.800 L546.400 51.300 L547.900 47.800 L544.300 46.400 L547.900 45 L546.400 41.500 L549.900 43 Z" fill="#f5a431"/>
</g>
<!-- 14 joint -->
<g stroke="#7d848a" stroke-width=".8">
<path d="M568 49 Q568.500 45.500 572 43.600 L573.800 42.600 V58.600 L568 62.600 Z" fill="#cfd3d6"/>
<path d="M573.800 42.600 L577 41.400 V48.500 L574.500 49.800 V58.400 L573.800 58.600 Z" fill="#aeb4b9"/>
<path d="M585 43.600 Q589.800 46.500 590.400 52 V63 L585 59.600 Z" fill="#aeb4b9"/>
<path d="M580.500 46 L585 43.600 V59.600 L580.500 57.400 Z" fill="#d4d8db"/>
<path d="M577.500 50.400 L580.500 49 V55.400 L577.500 53.800 Z" fill="#bfc5c9"/>
</g>
<!-- 15 construct -->
<g>
<path d="M630.600 46.600 L636.500 41.400 L641.600 40.600 L636 46.600 Z" fill="#ececec" stroke="#999" stroke-width=".5"/>
<rect x="630.600" y="46.600" width="5.600" height="17.600" fill="#dcdcdc" stroke="#999" stroke-width=".5"/>
<path d="M636.200 46.600 L644 40.400 V57.400 L636.200 64.200 Z" fill="#4dbb74"/>
<path d="M648 45.600 L654.300 40.500 V58.400 L648 64 Z" fill="#ea935a"/>
</g>
<!-- 16 inspect -->
<g>
<rect x="703.2" y="54.4" width="23" height="4.200" fill="#f0a92e"/>
<path d="M705 56.500 H725" stroke="#d88f1a" stroke-width=".8" stroke-dasharray="1.200 1.200"/>
<path d="M704 46.800 V54 M725.600 46.800 V54 M705 49.400 H724.600" stroke="#4a4a4a" stroke-width=".9" fill="none"/>
<path d="M704.400 49.400 L707.400 47.800 V51 Z M725.200 49.400 L722.200 47.800 V51 Z" fill="#4a4a4a"/>
</g>
<!-- 17 insert -->
<g>
<rect x="763.8" y="40.200" width="23.500" height="23.300" fill="#6cb6f0"/>
<path d="M763.800 56 L771 50.200 L776.500 55.800 L780 53.200 L787.300 58.500 V63.500 H763.800 Z" fill="#3d8ed2"/>
<circle cx="780.400" cy="47" r="2.500" fill="#f4fbff"/>
</g>
<!-- 18 select -->
<g>
<rect x="819.500" y="37.600" width="30.400" height="29.800" fill="#3789d6"/>
<path d="M839.800 52.600 V62.200 L842 60.200 L843.600 63.800 L845.100 63.100 L843.600 59.600 L846.600 59.400 Z" fill="#fff" stroke="#2d2d2d" stroke-width=".8" stroke-linejoin="round"/>
</g>

</svg>
<div class="lb" style="left:113.75px;top:22.30px;font-size:9px;line-height:11px;color:#3f97d3;"><span class="fit" style="transform:scaleX(0.907)">SOLID</span></div>
<div class="lb" style="left:176.25px;top:22.30px;font-size:9px;line-height:11px;"><span class="fit" style="transform:scaleX(0.870)">SURFACE</span></div>
<div class="lb" style="left:250.00px;top:22.30px;font-size:9px;line-height:11px;"><span class="fit" style="transform:scaleX(0.865)">MESH</span></div>
<div class="lb" style="left:308.00px;top:22.30px;font-size:9px;line-height:11px;"><span class="fit" style="transform:scaleX(0.928)">SHEET METAL</span></div>
<div class="lb" style="left:402.25px;top:22.30px;font-size:9px;line-height:11px;"><span class="fit" style="transform:scaleX(0.913)">PLASTIC</span></div>
<div class="lb" style="left:472.25px;top:22.30px;font-size:9px;line-height:11px;"><span class="fit" style="transform:scaleX(0.922)">UTILITIES</span></div>
<div class="lb" style="left:546.50px;top:22.30px;font-size:9px;line-height:11px;"><span class="fit" style="transform:scaleX(0.942)">MANAGE</span></div>
<div class="lb" style="left:179.50px;top:70.20px;font-size:9px;line-height:11px;color:#dcecfa;"><span class="fit" style="transform:scaleX(0.907)">CREATE</span></div>
<div class="lb" style="left:394.20px;top:70.20px;font-size:9px;line-height:11px;"><span class="fit" style="transform:scaleX(0.929)">MODIFY</span></div>
<div class="lb" style="left:536.20px;top:70.20px;font-size:9px;line-height:11px;"><span class="fit" style="transform:scaleX(0.855)">ASSEMBLE</span></div>
<div class="lb" style="left:612.00px;top:70.20px;font-size:9px;line-height:11px;"><span class="fit" style="transform:scaleX(0.908)">CONSTRUCT</span></div>
<div class="lb" style="left:694.10px;top:70.20px;font-size:9px;line-height:11px;"><span class="fit" style="transform:scaleX(0.869)">INSPECT</span></div>
<div class="lb" style="left:757.60px;top:70.20px;font-size:9px;line-height:11px;"><span class="fit" style="transform:scaleX(0.865)">INSERT</span></div>
<div class="lb" style="left:816.50px;top:70.20px;font-size:9px;line-height:11px;"><span class="fit" style="transform:scaleX(0.837)">SELECT</span></div>
<div class="lb" style="left:27.50px;top:44.50px;font-size:10.2px;line-height:12px;font-weight:bold;color:#383838;"><span class="fit" style="transform:scaleX(0.819)">DESIGN</span></div>
<div class="lb" style="left:314.75px;top:0.40px;font-size:10.9px;line-height:14px;color:#8a8a8a;"><span class="fit" style="transform:scaleX(0.915)">ThreadedRod v3</span></div>
<div class="lb" style="left:670.00px;top:0.30px;font-size:10.9px;line-height:14px;color:#484848;"><span class="fit" style="transform:scaleX(0.990)">Untitled*</span></div>
<div class="lb" style="left:17.60px;top:93.50px;font-size:9.2px;line-height:11px;color:#595959;"><span class="fit" style="transform:scaleX(0.826)">BROWSER</span></div>
<div class="lb" style="left:17.40px;top:563.60px;font-size:8.8px;line-height:11px;color:#5c5c5c;-webkit-text-stroke:0;"><span class="fit" style="transform:scaleX(0.953)">COMMENTS</span></div>
<div id="menu">
<div class="abs" style="left:4px;top:204.0px;width:133px;height:16.6px;background:#d8d8d8;border-bottom:0.6px solid #c4c4c4"></div>
<svg class="ic" style="top:3.5px" viewBox="0 0 12 12"><rect x="1" y="6" width="4.6" height="4.8" fill="#d4d4d4" stroke="#9a9a9a" stroke-width=".4"/><rect x="6" y="6" width="4.8" height="4.8" fill="#e2e2e2" stroke="#9a9a9a" stroke-width=".4"/><rect x="1" y="1.2" width="4.6" height="4.6" fill="#4c9ee6"/><path d="M8.6 0 L9.4 2 L11.4 1.200 L10.600 3.200 L12.600 4 L10.600 4.800 L11.400 6.800 L9.400 6 L8.600 8 L7.800 6 L5.800 6.800 L6.600 4.800 L4.600 4 L6.600 3.200 L5.800 1.200 L7.800 2 Z" fill="#f5a431"/><path d="M0.500 11.600 H11.500" stroke="#888" stroke-width=".6"/></svg>
<div class="mi" style="top:3.9px">New Component</div>
<svg class="ic" style="top:20.3px" viewBox="0 0 12 12"><rect x="1" y="1" width="9.500" height="9.500" fill="none" stroke="#777" stroke-width=".7" stroke-dasharray="1.800 1"/><path d="M3.500 3.500 H7.500 Q7.500 7.500 3.500 7.500 Z" fill="none" stroke="#888" stroke-width=".6"/><path d="M8.200 6.500 H10 V8.300 H11.800 V10 H10 V11.800 H8.200 V10 H6.400 V8.300 H8.200 Z" fill="#3fa84e"/></svg>
<div class="mi" style="top:20.7px">Create Sketch</div>
<svg class="ic" style="top:37.0px" viewBox="0 0 12 12"><path d="M0.600 5 Q0.600 1.500 4 1.500 Q6.500 1.500 7.500 3 L10.500 4.500 Q11.400 5.500 11.200 8 Q11 10.500 8.500 11.400 H3 Q0.600 11.200 0.600 9 Z" fill="#a070d8"/><path d="M6.800 5.200 Q7 4 8.500 3.700 L10.500 4.500 Q11.400 5.500 11.200 8 Q11 10.500 8.500 11.400 H6.800 Z" fill="#7a4fc0"/><path d="M8.800 0 L9.500 1.700 L11.200 1 L10.500 2.700 L12.200 3.400 L10.500 4.100 L11.200 5.800 L9.500 5.100 L8.800 6.800 L8.100 5.100 L6.400 5.800 L7.100 4.100 L5.400 3.400 L7.100 2.700 L6.400 1 L8.100 1.700 Z" fill="#f5a431"/></svg>
<div class="mi" style="top:37.4px">Create Form</div>
<svg class="ic" style="top:53.8px" viewBox="0 0 12 12"><path d="M3.500 1.200 H11 V9 L9 11.200 H1.800 V4 Z" fill="#e6e6e6" stroke="#aaa" stroke-width=".5"/><path d="M9 3.500 L11 1.200 V9 L9 11.200 Z" fill="#c4c4c4"/><path d="M0.400 7.600 Q1.500 5.200 4.800 5.800 V4.600 L7.400 7.200 L4.800 9.600 V8.400 Q2 8.200 0.400 7.600 Z" fill="#333"/></svg>
<div class="mi" style="top:54.2px">Derive</div>
<div class="msep" style="top:68.5px"></div>
<svg class="ic" style="top:71.0px" viewBox="0 0 12 12"><rect x="0.800" y="1.600" width="8.400" height="9.600" fill="#4c9ee6"/><path d="M0.800 1.600 L2.400 0.200 H10.600 L9.200 1.600 Z" fill="#80c0f2"/><path d="M9.200 1.600 L10.600 0.200 V9.600 L9.200 11.200 Z" fill="#337fc6"/><path d="M11.600 1 V9" stroke="#aaa" stroke-width=".5"/></svg>
<div class="mi" style="top:71.4px">Extrude</div>
<div class="mi" style="left:110px;top:71.4px">E</div>
<svg class="ic" style="top:88.0px" viewBox="0 0 12 12"><path d="M0.600 5 Q6 0.800 11.600 5 V8 L9.500 10.600 Q6 8.600 2.600 10.600 L0.600 8.200 Z" fill="#3f8fd6"/><path d="M0.600 5 Q6 0.800 11.600 5 L9.500 7.200 Q6 5.200 2.600 7.200 Z" fill="#80c0f2"/><path d="M1.200 2.400 Q6 -0.600 11 2.600" stroke="#555" stroke-width=".6" fill="none"/></svg>
<div class="mi" style="top:88.4px">Revolve</div>
<svg class="ic" style="top:104.8px" viewBox="0 0 12 12"><path d="M1 4.500 Q1 1 5 1 Q6 1 6.500 2 L10.500 4 Q11.500 5 11.500 9 L10 10.500 Q10 6.500 8 6 L4 5.500 Q2.500 5.500 2.500 7.500 L1 7 Z" fill="#4c9ee6"/><ellipse cx="6.600" cy="8.600" rx="3.600" ry="2.800" fill="#fafafa" stroke="#666" stroke-width=".6"/><path d="M3 6 Q6.500 4.500 10.500 7" stroke="#337fc6" stroke-width="1.200" fill="none"/></svg>
<div class="mi" style="top:105.2px">Sweep</div>
<svg class="ic" style="top:121.5px" viewBox="0 0 12 12"><path d="M0.600 0.800 H11.400 V7 L9.600 9.400 Q6 4.500 2.600 9.400 L0.600 7 Z" fill="#4c9ee6"/><path d="M0.600 0.800 H2 V8.600 L0.600 7 Z M10.200 0.800 H11.400 V7 L10.200 8.600 Z" fill="#337fc6"/><ellipse cx="6" cy="9" rx="3.600" ry="2.800" fill="#fafafa" stroke="#666" stroke-width=".6"/></svg>
<div class="mi" style="top:121.9px">Loft</div>
<svg class="ic" style="top:138.3px" viewBox="0 0 12 12"><path d="M1.200 1 L2.600 0.400 Q4 6.500 11 9 L10.600 10.800 H1.200 Z" fill="#8cc4f2"/><path d="M2.600 2 Q4 7 10.600 10.800 H2.600 Z" fill="#4c9ee6"/><path d="M1.200 1 V10.800 H10.600" stroke="#99a" stroke-width=".5" fill="none"/></svg>
<div class="mi" style="top:138.7px">Rib</div>
<svg class="ic" style="top:155.0px" viewBox="0 0 12 12"><rect x="0.800" y="0.800" width="10.400" height="10.400" fill="#dfe6ec" stroke="#777" stroke-width=".7"/><path d="M4.400 1 V11 M1 5 H11" stroke="#4c9ee6" stroke-width="1.600"/><path d="M8 1 V11" stroke="#8cc4f2" stroke-width="1"/></svg>
<div class="mi" style="top:155.4px">Web</div>
<svg class="ic" style="top:171.8px" viewBox="0 0 12 12"><path d="M0.800 7 L6.500 1 L11.400 5 L6 11.400 H0.800 Z" fill="#e8eef4" stroke="#b0b8c0" stroke-width=".5"/><path d="M4 6 L6.500 3.400 L8.600 5.200 L6.200 8 Z" fill="#cfe4f7" stroke="#4c9ee6" stroke-width=".8"/><path d="M0.800 9 L4 11.400 H0.800 Z" fill="#80c0f2"/></svg>
<div class="mi" style="top:172.2px">Emboss</div>
<div class="msep" style="top:186.0px"></div>
<svg class="ic" style="top:189.0px" viewBox="0 0 12 12"><rect x="0.800" y="0.800" width="10.400" height="10.400" rx="1" fill="#d8d8d8" stroke="#555" stroke-width=".8"/><circle cx="5.800" cy="6.200" r="3.300" fill="#6aa9e0" stroke="#555" stroke-width=".7"/><path d="M3.400 4.600 Q5.500 3.500 8 5.200 Q6.500 6.500 3.400 4.600 Z" fill="#e8f2fb"/></svg>
<div class="mi" style="top:189.4px">Hole</div>
<div class="mi" style="left:110px;top:189.4px">H</div>
<svg class="ic" style="top:206.0px" viewBox="0 0 12 12"><rect x="0.600" y="0.600" width="10.800" height="10.800" fill="#e9f2fa"/><path d="M0.600 3.200 L11.400 1.200 M0.600 6 L11.400 4 M0.600 8.800 L11.400 6.800 M0.600 11.400 L11.400 9.600" stroke="#4c9ee6" stroke-width="1.300"/><path d="M0.800 0.600 V11.400" stroke="#555" stroke-width=".7"/></svg>
<div class="mi" style="top:206.4px">Thread</div>
<svg class="abs" style="left:126px;top:206.0px" width="4" height="12" viewBox="0 0 4 12"><circle cx="2" cy="2.2" r="1.05" fill="#333"/><circle cx="2" cy="6" r="1.05" fill="#333"/><circle cx="2" cy="9.8" r="1.05" fill="#333"/></svg>
<svg class="ic" style="top:223.3px" viewBox="0 0 12 12"><rect x="0.600" y="2.600" width="8.600" height="8.800" fill="#4c9ee6"/><path d="M0.600 2.600 L2.600 0.600 H11.400 L9.200 2.600 Z" fill="#80c0f2"/><path d="M9.200 2.600 L11.400 0.600 V9.400 L9.200 11.400 Z" fill="#337fc6"/></svg>
<div class="mi" style="top:223.7px">Box</div>
<svg class="ic" style="top:240.3px" viewBox="0 0 12 12"><path d="M1 2.800 V9.400 A5 2.200 0 0 0 11 9.400 V2.800 Z" fill="#4c9ee6"/><ellipse cx="6" cy="2.800" rx="5" ry="2.200" fill="#80c0f2"/></svg>
<div class="mi" style="top:240.7px">Cylinder</div>
<svg class="ic" style="top:257.0px" viewBox="0 0 12 12"><circle cx="6" cy="6" r="5.400" fill="#5aa5e6"/><path d="M1.500 4 A5.400 5.400 0 0 1 10.500 4 Q6 1.500 1.500 4 Z" fill="#86c0f1"/></svg>
<div class="mi" style="top:257.4px">Sphere</div>
<svg class="ic" style="top:273.7px" viewBox="0 0 12 12"><ellipse cx="6" cy="6" rx="5.600" ry="4" fill="#4f9fe2"/><ellipse cx="6" cy="5.800" rx="2.200" ry="1.200" fill="#eaf3fb"/></svg>
<div class="mi" style="top:274.1px">Torus</div>
<svg class="ic" style="top:290.3px" viewBox="0 0 12 12"><path d="M2 1.500 L10 3.200 L2 5.200 L10 7 L2 9 L10 10.800" stroke="#3a8ad2" stroke-width="1.700" fill="none" stroke-linejoin="round"/></svg>
<div class="mi" style="top:290.7px">Coil</div>
<svg class="ic" style="top:307.0px" viewBox="0 0 12 12"><path d="M1.500 8.600 L9 4" stroke="#4c9ee6" stroke-width="3.600" stroke-linecap="round"/><ellipse cx="9.600" cy="3.800" rx="1.500" ry="1.900" fill="#80c0f2" transform="rotate(35 9.600 3.800)"/></svg>
<div class="mi" style="top:307.4px">Pipe</div>
<div class="msep" style="top:320.8px"></div>
<div class="mi" style="top:325.2px">Pattern</div>
<svg class="abs" style="left:127px;top:326.8px" width="6" height="8" viewBox="0 0 6 8"><path d="M0.500 0.500 L5.200 4 L0.500 7.500 Z" fill="#222"/></svg>
<svg class="ic" style="top:341.4px" viewBox="0 0 12 12"><path d="M5.200 1 V11 H0.800 Z" fill="#4a98dd"/><path d="M6.800 1 V11 H11.200 Z" fill="#e6e6e6" stroke="#999" stroke-width=".5"/><path d="M6 0.200 V11.800" stroke="#888" stroke-width=".5"/></svg>
<div class="mi" style="top:341.8px">Mirror</div>
<div class="msep" style="top:355.8px"></div>
<svg class="ic" style="top:358.8px" viewBox="0 0 12 12"><path d="M0.600 5.500 L5 2 L11.400 4 L7 8 Z" fill="#eef4fa" stroke="#8aa" stroke-width=".5"/><path d="M0.600 5.500 L7 8 L11.400 4 V6.200 L7 10.400 L0.600 7.800 Z" fill="#4c9ee6"/></svg>
<div class="mi" style="top:359.2px">Thicken</div>
<svg class="ic" style="top:375.4px" viewBox="0 0 12 12"><circle cx="4.600" cy="7.400" r="4.200" fill="#e9824a"/><rect x="4.600" y="0.600" width="6.800" height="6.800" fill="#8d8d8d"/><path d="M4.600 3.200 A4.200 4.200 0 0 1 8.800 7.400 H4.600 Z" fill="#5aa0dc"/></svg>
<div class="mi" style="top:375.8px">Boundary Fill</div>
<div class="msep" style="top:389.8px"></div>
<svg class="ic" style="top:393.2px" viewBox="0 0 12 12"><rect x="1" y="2.400" width="8.600" height="8.800" fill="#e4e4e4" stroke="#999" stroke-width=".6"/><path d="M1 2.400 L2.800 0.800 H11.200 L9.600 2.400 Z" fill="#f2f2f2" stroke="#999" stroke-width=".4"/><path d="M9.600 2.400 L11.200 0.800 V9.400 L9.600 11.200 Z" fill="#c2c2c2"/><circle cx="10" cy="2" r="1.800" fill="#f5a431"/></svg>
<div class="mi" style="top:393.6px">Create Base Feature</div>
<div class="mi" style="top:410.2px">Create PCB</div>
<svg class="abs" style="left:127px;top:411.8px" width="6" height="8" viewBox="0 0 6 8"><path d="M0.500 0.500 L5.200 4 L0.500 7.500 Z" fill="#222"/></svg>
</div>
<div id="tip">
<svg class="abs" style="left:0;top:0" width="268" height="302" viewBox="242 290 268 302">
<defs>
<clipPath id="thr"><ellipse cx="371.800" cy="451" rx="57.400" ry="30.600"/></clipPath>
<clipPath id="cyl"><path d="M314.400 451 A57.400 30.600 0 0 0 429.200 451 L428.600 512 A57 27 0 0 1 314.800 512 Z"/></clipPath>
<linearGradient id="wallg" x1="0" x2="1" y1="0" y2="0"><stop offset="0" stop-color="#8c949f"/><stop offset=".5" stop-color="#878e99"/><stop offset="1" stop-color="#9098a3"/></linearGradient>
</defs>
<!-- top face -->
<polygon points="336.100,408.200 406.700,408.200 454.300,432.200 461.200,468.200 410.800,499.400 333.400,499.400 283.400,469.400 291.300,431.200" fill="#6a675f"/>
<polygon points="336.100,408.200 406.700,408.200 454.300,432.200 461.200,468.200 410.800,499.400 333.400,499.400 283.400,469.400 291.300,431.200" fill="none" stroke="#77746b" stroke-width=".7"/>
<!-- side faces -->
<polygon points="283.400,469.400 333.400,499.400 333.800,557.600 287.200,523.200" fill="#605d55"/>
<polygon points="333.400,499.400 410.800,499.400 410.800,557 333.800,557.600" fill="#44423d"/>
<polygon points="410.800,499.400 461.200,468.200 458.300,519.600 410.800,557" fill="#524f49"/>
<path d="M333.400 499.400 L333.800 557.600 M410.800 499.400 V557" stroke="#66635b" stroke-width=".6"/>
<!-- thread -->
<ellipse cx="371.800" cy="451" rx="57.400" ry="30.600" fill="#2766c8"/>
<g clip-path="url(#thr)" fill="none" stroke="#4a90ec" stroke-width="2.1">
<ellipse cx="371.8" cy="452.6" rx="57.4" ry="30.6"/>
<ellipse cx="371.8" cy="456.7" rx="56.9" ry="30.3"/>
<ellipse cx="371.8" cy="460.7" rx="56.4" ry="30.1"/>
<ellipse cx="371.8" cy="464.8" rx="55.9" ry="29.8"/>
<ellipse cx="371.8" cy="468.9" rx="55.4" ry="29.6"/>
<ellipse cx="371.8" cy="473.0" rx="54.9" ry="29.3"/>
<ellipse cx="371.8" cy="477.0" rx="54.4" ry="29.0"/>
<ellipse cx="371.8" cy="481.1" rx="53.9" ry="28.8"/>
<ellipse cx="371.8" cy="485.2" rx="53.4" ry="28.5"/>
<ellipse cx="371.8" cy="489.2" rx="52.9" ry="28.3"/>
<ellipse cx="371.8" cy="493.3" rx="52.4" ry="28.0"/>
<ellipse cx="371.8" cy="497.4" rx="51.9" ry="27.7"/>
<ellipse cx="371.8" cy="501.4" rx="51.4" ry="27.5"/>
<ellipse cx="371.8" cy="505.5" rx="50.9" ry="27.2"/>
</g>
<!-- hole lens -->
<ellipse cx="372.300" cy="478" rx="24.500" ry="3.900" fill="#53514b"/>
<!-- translucent cylinder -->
<g clip-path="url(#cyl)">
<rect x="310" y="440" width="125" height="110" fill="url(#wallg)"/>
<polygon points="283.400,469.400 333.400,499.400 333.800,557.600 287.200,523.200" fill="#5c667a"/>
<polygon points="333.400,499.400 410.800,499.400 410.800,557 333.800,557.600" fill="#3d4f6e"/>
<polygon points="410.800,499.400 461.200,468.200 458.300,519.600 410.800,557" fill="#545f77"/>
</g>
<path d="M314.400 451 A57.400 30.600 0 0 0 429.200 451" fill="none" stroke="#b9c9e2" stroke-width=".9"/>
<path d="M314.400 451 L314.800 512 A57 27 0 0 0 428.600 512 L429.200 451" fill="none" stroke="#a9bcd9" stroke-width=".9"/>
<ellipse cx="371.800" cy="451" rx="57.400" ry="30.600" fill="none" stroke="#7fb2ee" stroke-width=".8"/>
<!-- little icon -->
<path d="M320.600 474.800 Q320.400 472.400 322.800 472.600 L324.600 471 Q327.600 470.400 328.800 472.400 Q329 474 327 474.600 L326.200 476.800 Q325.800 479.400 322.800 479.200 Q320.600 478.400 320.600 474.800 Z" fill="#3f7fc4" stroke="#e4eef9" stroke-width="1"/>
</svg>
<p style="top:22.9px">Add internal or external threads to cylindrical<br>geometry.Threads can be cosmetic or<br>modeled on the geometry.</p>
<p style="top:73.1px">Select a cylindrical face then set the thread<br>specifications.</p>
<p style="top:287px">Press ⌘/ for more help.</p>
</div>
<svg class="abs" style="left:120px;top:285px" width="18" height="22" viewBox="120 285 18 22">
<path d="M125.300 288.400 V299.600 L127.800 297.300 L129.600 301.300 L131.400 300.500 L129.700 296.600 L133.200 296.400 Z" fill="#111" stroke="#fff" stroke-width="1" stroke-linejoin="round"/>
</svg>
</body>
</html>
